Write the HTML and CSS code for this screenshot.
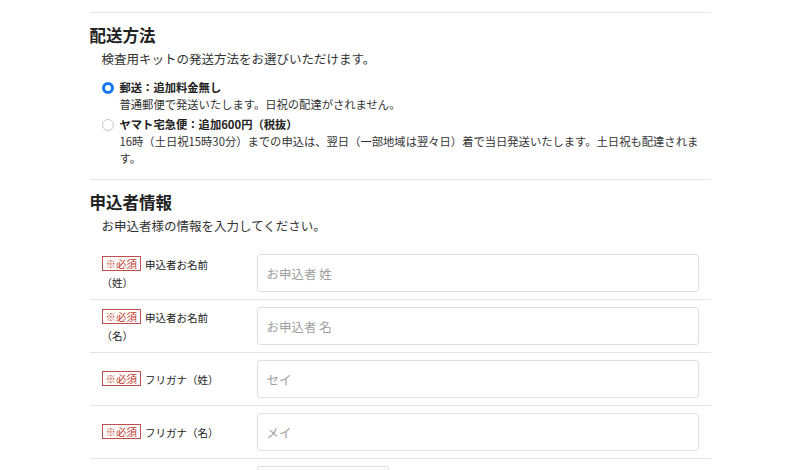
FILE: index.html
```html
<!DOCTYPE html>
<html lang="ja">
<head>
<meta charset="utf-8">
<link rel="stylesheet" href="styles.css">
</head>
<body>
<div class="page">
  <section class="section">
    <h2 class="heading">配送方法</h2>
    <p class="desc">検査用キットの発送方法をお選びいただけます。</p>
    <div class="options">
      <div class="option">
        <span class="radio radio-on"></span>
        <div class="option-body">
          <div class="option-title">郵送：追加料金無し</div>
          <div class="option-text">普通郵便で発送いたします。日祝の配達がされません。</div>
        </div>
      </div>
      <div class="option">
        <span class="radio"></span>
        <div class="option-body">
          <div class="option-title">ヤマト宅急便：追加600円（税抜）</div>
          <div class="option-text">16時（土日祝15時30分）までの申込は、翌日（一部地域は翌々日）着で当日発送いたします。土日祝も配達されます。</div>
        </div>
      </div>
    </div>
  </section>
  <section class="section">
    <h2 class="heading">申込者情報</h2>
    <p class="desc">お申込者様の情報を入力してください。</p>
    <div class="form">
      <div class="row">
        <div class="label"><span class="req">※必須</span>申込者お名前（姓）</div>
        <div class="field"><input class="input" type="text" placeholder="お申込者 姓"></div>
      </div>
      <div class="row">
        <div class="label"><span class="req">※必須</span>申込者お名前（名）</div>
        <div class="field"><input class="input" type="text" placeholder="お申込者 名"></div>
      </div>
      <div class="row">
        <div class="label"><span class="req">※必須</span>フリガナ（姓）</div>
        <div class="field"><input class="input" type="text" placeholder="セイ"></div>
      </div>
      <div class="row">
        <div class="label"><span class="req">※必須</span>フリガナ（名）</div>
        <div class="field"><input class="input" type="text" placeholder="メイ"></div>
      </div>
      <div class="row">
        <div class="label"><span class="req">※必須</span>郵便番号</div>
        <div class="field"><input class="input input-short" type="text"></div>
      </div>
    </div>
  </section>
</div>
</body>
</html>
```
FILE: styles.css
```css
* { box-sizing: border-box; }
html, body { margin: 0; padding: 0; background: #fff; }
body {
  font-family: "Noto Sans CJK JP", "Noto Sans", sans-serif;
  color: #333;
}
.page {
  width: 621px;
  margin: 0 auto;
  padding-top: 12px;
}
.section {
  border-top: 1.5px solid #e3e3e3;
}
.heading {
  margin: 10px 0 0;
  font-size: 16.5px;
  line-height: 24px;
  font-weight: 700;
  color: #222;
}
.desc {
  margin: 2px 0 0;
  padding-left: 12px;
  font-size: 12.5px;
  line-height: 20px;
  color: #333;
}
.options {
  margin: 10px 0 12px;
  padding-left: 12px;
  display: flex;
  flex-direction: column;
  gap: 3px;
}
.option {
  display: flex;
  align-items: flex-start;
  gap: 6px;
}
.radio {
  flex: none;
  width: 12px;
  height: 12px;
  margin-top: 3px;
  border-radius: 50%;
  border: 1px solid #c8c8c8;
  background: #fff;
}
.radio-on {
  border: 3.5px solid #1677f2;
  background: #fff;
}
.option-body {
  flex: 1;
  min-width: 0;
  font-size: 11.3px;
  line-height: 17px;
}
.option-title {
  font-weight: 700;
  color: #222;
}
.option-text {
  color: #333;
}
.form {
  margin-top: 11px;
}
.row {
  display: flex;
  align-items: center;
  padding: 7px 12px;
  border-bottom: 1.5px solid #e3e3e3;
}
.label {
  flex: none;
  width: 122px;
  margin-right: 33px;
  padding-top: 2px;
  font-size: 10.5px;
  line-height: 18px;
  color: #222;
}
.req {
  display: inline-block;
  margin-right: 4px;
  padding: 0 3px;
  border: 1px solid #c0504d;
  color: #c0392b;
  font-size: 10.5px;
  line-height: 13px;
  vertical-align: 1px;
}
.field {
  flex: 1;
}
.input {
  display: block;
  width: 100%;
  height: 38px;
  padding: 0 9px;
  border: 1px solid #dcdfe3;
  border-radius: 3px;
  font-family: inherit;
  font-size: 12.5px;
  color: #333;
  background: #fff;
}
.input::placeholder {
  color: #a0a0a0;
}
.input-short {
  width: 132px;
}
```
